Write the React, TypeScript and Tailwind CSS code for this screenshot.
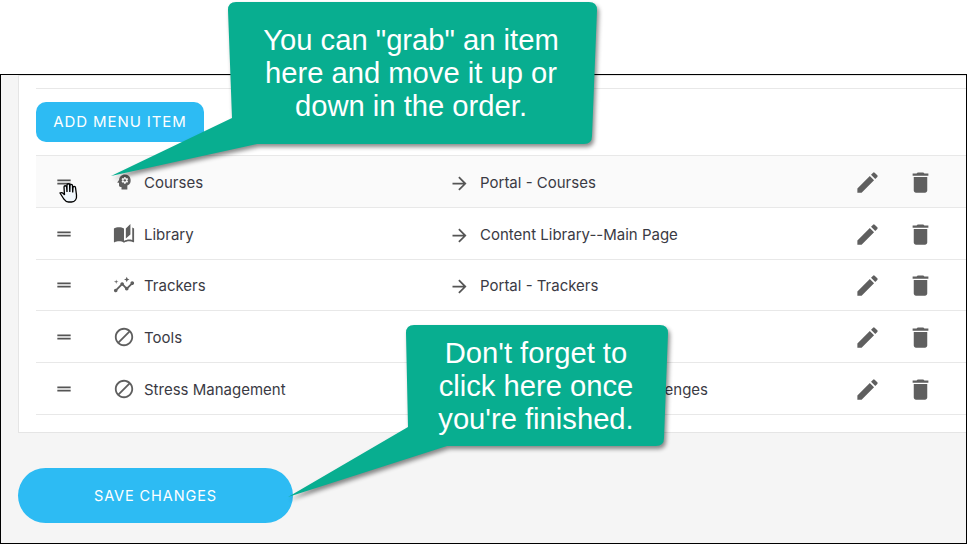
import { MdAutoStories, MdInsights, MdPsychology, MdDoNotDisturbAlt, MdArrowForward, MdDragHandle, MdEdit, MdDelete } from "react-icons/md";
import type { ReactNode } from "react";

type RowData = { name: string; icon: ReactNode; target: ReactNode; arrow: boolean; h: string; off: string; ico: string; bg?: string };

const rows: RowData[] = [
  { name: "Courses", icon: <MdPsychology size={20} className="ml-px" />, target: "Portal - Courses", arrow: true, h: "h-[52px]", off: "top-[2px]", ico: "top-px", bg: "bg-[#fafafa]" },
  { name: "Library", icon: <MdAutoStories size={22} />, target: "Content Library--Main Page", arrow: true, h: "h-[52px]", off: "top-[2px]", ico: "top-px" },
  { name: "Trackers", icon: <MdInsights size={22} />, target: "Portal - Trackers", arrow: true, h: "h-[51px]", off: "top-px", ico: "top-0" },
  { name: "Tools", icon: <MdDoNotDisturbAlt size={22} />, target: "", arrow: false, h: "h-[52px]", off: "top-[2px]", ico: "top-px" },
  {
    name: "Stress Management",
    icon: <MdDoNotDisturbAlt size={22} />,
    target: <span className="block w-[228px] text-right">Challenges</span>,
    arrow: false,
    h: "h-[52px]",
    off: "top-[2px]",
    ico: "top-px",
  },
];

function Hand() {
  return (
    <svg className="absolute left-[23px] top-[26px]" width="20" height="21" viewBox="0 0 20 21">
      <path
        d="M1 11 C2.500 10 4.500 11 5.500 13 L5 5 C5 3.300 7.500 3.300 7.600 5 L8 10 L8 3 C8 1.300 10.600 1.300 10.600 3 L10.800 10 L11 3.500 C11 2 13.500 2 13.500 3.500 L13.700 10.500 L14 5.500 C14 4 16.500 4 16.500 5.500 L17.500 13 C18 17 16 20 12.500 20 L9.500 20 C7 20 6 18.500 4.500 16.500 Z"
        fill="#f2f8fd"
        stroke="#000"
        strokeWidth="1.300"
      />
    </svg>
  );
}

function Row({ r, first }: { r: RowData; first: boolean }) {
  return (
    <div className={`relative flex items-center border-b border-[#e8e8e8] text-[15px] text-[#3a3a44] ${r.h} ${r.bg ?? ""}`}>
      <div className="flex w-[77px] justify-start pl-[18px] text-[#555]">
        <MdDragHandle size={20} />
      </div>
      <div className="flex w-[31px] text-[#5f5f5f]">{r.icon}</div>
      <div className={`relative w-[305px] ${r.off}`}>{r.name}</div>
      <div className={`relative flex w-[31px] text-[#555] ${r.off}`}>
        {r.arrow && <MdArrowForward size={21} />}
      </div>
      <div className={`relative w-[374px] ${r.off}`}>{r.target}</div>
      <div className={`relative flex w-[53px] text-[#5f5f5f] ${r.ico}`}>
        <MdEdit size={27} />
      </div>
      <div className={`relative flex text-[#5f5f5f] ${r.ico}`}>
        <MdDelete size={27} />
      </div>
      {first && <Hand />}
    </div>
  );
}

function Callout({ d, box, children }: { d: string; box: string; children: ReactNode }) {
  return (
    <>
      <svg className="absolute left-0 top-0 drop-shadow-[2px_3px_2px_rgba(0,0,0,0.45)]" width="967" height="544" viewBox="0 0 967 544">
        <path d={d} fill="#08ae90" />
      </svg>
      <div className={`absolute flex flex-col items-center text-center font-['Liberation_Sans',Arial,sans-serif] text-[29.200px] leading-[33px] text-white ${box}`}>
        {children}
      </div>
    </>
  );
}

export default function App() {
  return (
    <div className="relative h-[544px] w-[967px] overflow-hidden bg-white font-['Inter',sans-serif]">
      <div className="mt-[74px] h-[470px] overflow-hidden border border-black bg-[#f5f5f5]">
        <div className="ml-[17px] mr-[-20px] h-[358px] border border-[#e5e5e5] bg-white pl-[17px] pt-[12px]">
          <div className="border-t border-[#e8e8e8] pt-[13px]">
            <button className="h-[40px] w-[168px] rounded-[10px] bg-[#2dbbf3] text-[15px] tracking-[0.9px] text-white">ADD MENU ITEM</button>
          </div>
          <div className="mt-[13px] border-t border-[#e8e8e8]">
            {rows.map((r, i) => (
              <Row key={r.name} r={r} first={i === 0} />
            ))}
          </div>
        </div>
        <button className="ml-[17px] mt-[35px] h-[55px] w-[275px] rounded-full bg-[#2dbbf3] text-[14.500px] tracking-[0.9px] text-white">SAVE CHANGES</button>
      </div>
      <Callout
        d="M236 2 H589 Q597 2 597 10 L592 136 Q592 144 584 144 H257 L111 176 L232 118 L228 10 Q228 2 236 2 Z"
        box="left-[228px] top-[24px] w-[366px]"
      >
        <span>You can "grab" an item</span>
        <span>here and move it up or</span>
        <span>down in the order.</span>
      </Callout>
      <Callout
        d="M414 325 H660 Q668 325 668 333 L664 438 Q664 446 656 446 H447 L288 497 L408 427 L406 333 Q406 325 414 325 Z"
        box="left-[407px] top-[337px] w-[258px]"
      >
        <span>Don't forget to</span>
        <span>click here once</span>
        <span>you're finished.</span>
      </Callout>
    </div>
  );
}
